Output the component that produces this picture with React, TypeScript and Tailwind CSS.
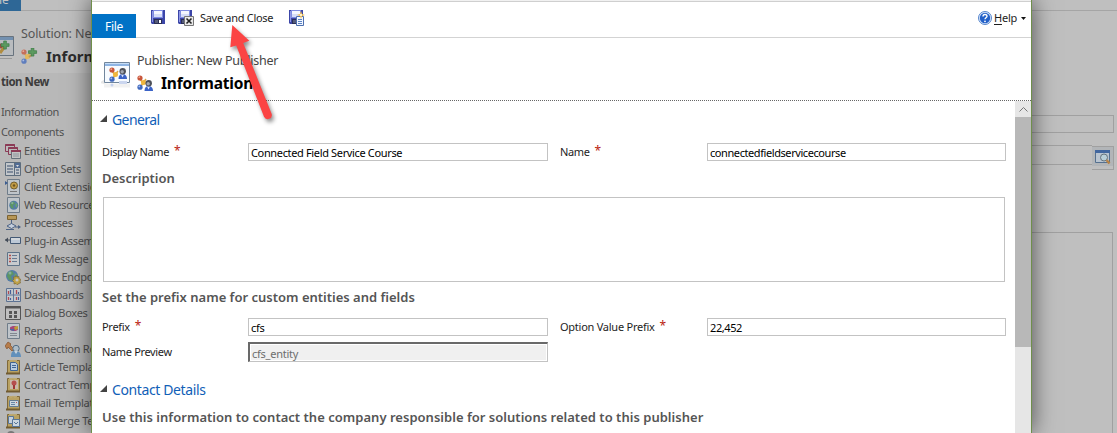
import type { ReactNode } from "react";

const Svg = ({ w = 16, h = 16, children, className = "" }: { w?: number; h?: number; children: ReactNode; className?: string }) => (
  <svg width={w} height={h} viewBox={`0 0 ${w} ${h}`} className={`shrink-0 ${className}`}>
    {children}
  </svg>
);

const Floppy = () => (
  <>
    <path d="M0 0h14v14H1L0 13z" fill="#3c46a8" />
    <path d="M1 1h1v11H1z" fill="#8f98e6" />
    <path d="M2 0h10v8H2z" fill="#7f8be0" />
    <path d="M3 1h8v6H3z" fill="#f4f6ff" />
    <path d="M3 4h8v3H3z" fill="#d5dcf8" />
    <path d="M3 9h8v5H3z" fill="#2b2f55" />
    <path d="M4 10h3v3H4z" fill="#555b78" />
    <path d="M8 10h2v3H8z" fill="#fff" />
  </>
);

const SaveIcon = () => <Svg w={14} h={14}><Floppy /></Svg>;
const SaveCloseIcon = () => (
  <Svg w={16} h={16}>
    <Floppy />
    <path d="M6.500 6.500h9v9h-9z" fill="#e9e9e9" stroke="#777" />
    <path d="M8.500 8.500l5 5M13.500 8.500l-5 5" stroke="#222" strokeWidth="1.600" />
  </Svg>
);
const SaveNewIcon = () => (
  <Svg w={16} h={16}>
    <Floppy />
    <path d="M7.500 6.500h7v9h-7z" fill="#f2f7ff" stroke="#4e6fae" />
    <path d="M9 9.500h4M9 11.500h4M9 13.500h4" stroke="#5b82c4" />
    <path d="M12 1l1 3 3 1-3 1-1 3-1-3-3-1 3-1z" fill="#f6bd47" />
    <circle cx="12" cy="5" r="1.200" fill="#fff6cf" />
  </Svg>
);

const Trio = () => (
  <>
    <path d="M3 4l3 4-3 5M6 8l3-4" stroke="#d9a441" strokeWidth="1.500" fill="none" />
    <circle cx="3" cy="3" r="2.600" fill="#c8553a" />
    <circle cx="6.500" cy="7.500" r="2.500" fill="#f0b63c" />
    <circle cx="3" cy="12.200" r="2.600" fill="#4069bd" />
    <circle cx="2.300" cy="2.200" r="0.900" fill="#eca48f" />
    <circle cx="2.300" cy="11.400" r="0.900" fill="#a5bdf0" />
  </>
);
const Person = () => (
  <>
    <path d="M0.500 11c0-3.500 1.500-5 4-5S9 7.500 9 11z" fill="#3b63c7" />
    <path d="M3 6.500l1.500 3L6 6.500z" fill="#dce8ff" />
    <circle cx="4.700" cy="3.200" r="3.200" fill="#4d5059" />
    <circle cx="4.200" cy="3.700" r="1.700" fill="#a2a7b1" />
  </>
);

const PublisherSmall = () => (
  <Svg w={17} h={17}>
    <Trio />
    <g transform="translate(7 5)"><Person /></g>
  </Svg>
);
const PublisherLarge = () => (
  <Svg w={32} h={32}>
    <path d="M-2 23l6-4v5z" fill="#e6e6e6" />
    <path d="M3 23.500h26v4H3z" fill="#f1f1f1" />
    <path d="M3.500 2.500h25v20h-25z" fill="#f7fbff" stroke="#71869d" />
    <path d="M4 3h24v3H4z" fill="#8fb5e4" />
    <path d="M4 3h24v1H4z" fill="#c7ddf5" />
    <g transform="translate(8 7)"><Trio /></g>
    <g transform="translate(17 8)"><Person /><path d="M1 13h8v3H1z" fill="#cbd6ef" /></g>
    <circle cx="11" cy="25" r="1.500" fill="#c5d2ef" />
  </Svg>
);
const Plus = () => <path d="M3 0h3v3h3v3H6v3H3V6H0V3h3z" fill="#5c9a60" stroke="#357740" strokeWidth="0.700" />;
const SolutionSmall = () => (
  <Svg w={17} h={17}>
    <g opacity="0.750"><g transform="translate(0 1)"><Trio /></g><path d="M8 9l4-3" stroke="#b38b39" strokeWidth="2" /></g>
    <g transform="translate(7.500 0) scale(.9)"><Plus /></g>
  </Svg>
);
const SolutionLarge = () => (
  <Svg w={15} h={28}>
    <path d="M-1 .5h14.500v19H-1z" fill="#b9bcbf" stroke="#68737e" />
    <path d="M0 1h13v3H0z" fill="#7290b0" />
    <circle cx="1" cy="10" r="2.500" fill="#a04d40" />
    <path d="M0 17l3-4 2-3" stroke="#b08c3f" strokeWidth="3" fill="none" />
    <g transform="translate(1 5) scale(.9)"><Plus /></g>
    <path d="M0 22h12v1H0z" fill="#999" />
  </Svg>
);

const sheet = <path d="M2.500 .5h12v15h-12z" fill="#bfc5ca" stroke="#6f7c89" />;
const gold = (
  <>
    <path d="M2.500 1.500h12v13h-12z" fill="#b9a263" stroke="#80693a" />
    <path d="M1 14.500h14" stroke="#715b30" strokeWidth="2" />
    <path d="M4 1l2 1 2-1 2 1 2-1" stroke="#d0bd85" fill="none" />
  </>
);
const globe = (
  <>
    <circle cx="7" cy="7" r="6" fill="#557da5" />
    <path d="M3 3l4-1 2 3-3 2 1 4-3 0-2-4z" fill="#5c9664" />
    <path d="M10 4l2 2-1 4-2-2z" fill="#6aa270" />
    <circle cx="5" cy="4" r="1.500" fill="#9fbcc4" opacity=".6" />
  </>
);

const navItems: { label: string; icon: ReactNode }[] = [
  { label: "Entities", icon: (<>
    <path d="M.5 1.500h9v7h-9z" fill="#bbb" stroke="#8b3b56" /><path d="M.5 2h9" stroke="#8b3b56" strokeWidth="2" />
    <path d="M3.500 4.500h9v7h-9z" fill="#bbb" stroke="#8b3b56" /><path d="M3.500 5h9" stroke="#8b3b56" strokeWidth="2" />
    <path d="M6.500 7.500h9v8h-9z" fill="#c3c3c3" stroke="#65707a" /><path d="M6 8h10" stroke="#8b3b56" strokeWidth="2" />
    <path d="M8 11h6M8 13h6" stroke="#8d969e" /></>) },
  { label: "Option Sets", icon: (<>
    <path d="M.5 1.500h15v13H.5z" fill="#c3c7cb" stroke="#5e6d7d" /><path d="M9.500 1v14" stroke="#5e6d7d" />
    <path d="M10 2h5v5h-5z" fill="#526c94" /><path d="M11 4h3l-1.500 2z" fill="#ddd" />
    <path d="M2 5h6M2 8h6M2 11h6M11 9h3M11 12h3" stroke="#68778c" strokeWidth="1.300" /></>) },
  { label: "Client Extensions", icon: (<>
    {sheet}<path d="M0 2l3 2-3 2z" fill="#3b5d91" /><circle cx="9" cy="6.500" r="3.500" fill="#c19b45" stroke="#74602e" /><circle cx="9" cy="6.500" r="1.200" fill="#6b5526" /><path d="M5 12.500h7" stroke="#777" /></>) },
  { label: "Web Resources", icon: (<>{sheet}<g transform="translate(3.500 3) scale(.75)">{globe}</g></>) },
  { label: "Processes", icon: (<>
    <path d="M2.500 .5h9v4h-9z" fill="#b79756" stroke="#7c6230" /><path d="M6.500 5v4M10 12h5" stroke="#4d6385" fill="none" />
    <path d="M2 11l4.500-2.500L11 11l-4.500 2.500z" fill="#c5cedc" stroke="#4d6385" /><path d="M1 14.500h8" stroke="#4d6385" /><path d="M13 10l3 2-3 2z" fill="#4d6385" /></>) },
  { label: "Plug-in Assemblies", icon: (<>
    <path d="M0 7h5" stroke="#444c59" /><path d="M3 4.500L0 7l3 2.500z" fill="#444c59" /><path d="M5.500 4.500h10v6h-10z" fill="#bcc8d6" stroke="#445974" /><path d="M6 5h9v2H6z" fill="#d2d7dc" /></>) },
  { label: "Sdk Message Processing", icon: (<>
    <path d="M2.500 1.500h12v13h-12z" fill="#c8cbce" stroke="#5f7489" /><path d="M4 4.500h2M4 7.500h2M4 10.500h2" stroke="#b54c48" strokeWidth="1.500" /><path d="M7 4.500h5M7 7.500h5M7 10.500h5" stroke="#687b93" /></>) },
  { label: "Service Endpoints", icon: (<>
    {globe}<path d="M11 6.500l1 1.500 2-.5v2l2 1-1 1.500.5 2-2 .5-1 1.500-1.500-1.500-2 .5V13l-1.500-1.500L9 10l-.5-2 2 0z" fill="#c0a247" stroke="#77622b" strokeWidth=".6" /><circle cx="12" cy="11" r="1.500" fill="#c8c8c8" /></>) },
  { label: "Dashboards", icon: (<>
    <path d="M1.500 1.500h14v13h-14z" fill="#c5c9ce" stroke="#5c7292" /><path d="M8.500 1v14M1 8h15" stroke="#60779a" />
    <path d="M3.500 7V4M11.500 7V3M3.500 13V10M11.500 13v-3" stroke="#af4952" strokeWidth="1.300" /><path d="M5.500 7V3M13.500 7V5M5.500 13V11M13.500 13V10" stroke="#455f99" strokeWidth="1.200" /></>) },
  { label: "Dialog Boxes", icon: (<>
    <path d="M.5 1.500h15v13H.5z" fill="#bfbfbf" stroke="#555" /><path d="M0 2.500h16" stroke="#555" strokeWidth="2" /><path d="M4 6h3v3H4zM9 6h3v3H9zM4 10h3v3H4zM9 10h3v3H9z" fill="#575757" /></>) },
  { label: "Reports", icon: (<>
    {sheet}<path d="M5 4.500c2-2 6-2 8 0v2c-2 2-6 2-8 0z" fill="#a54679" /><path d="M9 4l4-1v3l-3 1z" fill="#bd9f36" /><path d="M5 6h4v2L5 7z" fill="#4869a4" /><path d="M5 10.500h7M5 12.500h7" stroke="#818891" /></>) },
  { label: "Connection Roles", icon: (<>
    <path d="M0 5l3-4 3 2-1 1 4 4-2 2-4-4-1 2z" fill="#b67d4b" stroke="#82522e" strokeWidth=".7" /><path d="M6 16c0-5 1-6 4.500-6S16 12 16 16z" fill="#6290bb" /><circle cx="11" cy="7.500" r="3.200" fill="#aebdc8" stroke="#526c83" /><path d="M9 10l2 3 2-3z" fill="#c7d4de" /></>) },
  { label: "Article Templates", icon: (<>{gold}<path d="M5.500 3.500h5l2 2v6h-7z" fill="#b8ccdf" stroke="#3f6493" /><path d="M7 6.500h4M7 8.500h4" stroke="#3f6493" /></>) },
  { label: "Contract Templates", icon: (<>{gold}<path d="M5 3h8v9H5z" fill="#c9b8aa" /><circle cx="9" cy="6" r="2.500" fill="#b64e4e" /><path d="M8 8h2v4H8z" fill="#a13737" /></>) },
  { label: "Email Templates", icon: (<>{gold}<path d="M4.500 5.500h9v6h-9z" fill="#cbd6df" stroke="#647c94" /><path d="M6 7.500h4M6 9.500h4" stroke="#6886a5" /><path d="M11 7h1v1h-1z" fill="#b55" /></>) },
  { label: "Mail Merge Templates", icon: (<>{gold}<path d="M3.500 3.500h5v7h-5z" fill="#c5d0dc" stroke="#587699" /><path d="M7.500 6.500h7v7h-7z" fill="#cbd6df" stroke="#587699" /><path d="M9 9l2 2 2-2" stroke="#587699" fill="none" /></>) },
  { label: "", icon: (<><circle cx="6" cy="4" r="4" fill="#777" /><circle cx="6" cy="4" r="2" fill="#aaa" /></>) },
];

const Star = () => <span className="mb-[2px] ml-[5px] text-[12px] leading-[12px] text-[#b91c10]">*</span>;

const Label = ({ children, required = false, className = "" }: { children: string; required?: boolean; className?: string }) => (
  <div className={`flex shrink-0 items-center whitespace-nowrap text-[11px] leading-[18px] text-[#1d1d1d] ${className}`}>
    <span>{children}</span>
    {required && <Star />}
  </div>
);

const Field = ({ value, className = "" }: { value: string; className?: string }) => (
  <div className={`flex h-[18px] shrink-0 items-center border border-[#c3c3c3] bg-white pt-[2px] pl-[2px] text-[11px] leading-[16px] whitespace-nowrap text-black ${className}`}>
    {value}
  </div>
);

const SectionTitle = ({ children, className = "" }: { children: string; className?: string }) => (
  <div className={`flex h-5 items-center pl-2 text-[14px] leading-5 text-[#1160b7] ${className}`}>
    <Svg w={7} h={7} className="mr-[5px] mb-[4px]"><path d="M7 0v7H0z" fill="#444" /></Svg>
    <span>{children}</span>
  </div>
);

const SubTitle = ({ children, className = "" }: { children: string; className?: string }) => (
  <div className={`h-5 pl-[10px] text-[13px] leading-5 font-semibold whitespace-nowrap text-[#555] ${className}`}>{children}</div>
);

function Background() {
  return (
    <div className="flex h-full w-full justify-between bg-[#bfbfbf]">
      <div className="flex w-[91px] shrink-0 flex-col overflow-hidden">
        <div className="flex h-[11px] shrink-0 border-b border-[#a5a5a5]">
          <div className="flex h-[11px] w-[21px] items-end overflow-hidden bg-[#2e6796] text-[12px] leading-[14px] text-[#c5c5c5]">
            <span className="-ml-[1px] mb-[4px]">le</span>
          </div>
        </div>
        <div className="flex h-[62px] shrink-0">
          <div className="w-[21px] shrink-0 pt-[25px]"><SolutionLarge /></div>
          <div className="whitespace-nowrap">
            <div className="pt-[14px] text-[12.5px] leading-[18px] tracking-[-0.1px] text-[#555]">Solution: New Solution</div>
            <div className="mt-[3px] flex items-center">
              <SolutionSmall />
              <span className="ml-[8px] text-[15px] leading-[20px] font-bold text-[#2d2d2d]">Information</span>
            </div>
          </div>
        </div>
        <div className="flex-1 bg-[#b8b8b8] whitespace-nowrap text-[#505050]">
          <div className="h-[30px] pl-[1px] text-[11.5px] leading-[17px] font-bold tracking-[-0.5px] text-[#3c3c3c]">tion New</div>
          <div className="h-[19px] pl-[1px] text-[11px] leading-[17px] tracking-[-0.4px]">Information</div>
          <div className="h-[20px] pl-[1px] text-[11px] leading-[20px] tracking-[-0.35px]">Components</div>
          {navItems.map((item, i) => (
            <div key={i} className="flex h-[18px] items-center pl-[5px] text-[11px] leading-[18px]">
              <Svg>{item.icon}</Svg>
              <span className="ml-[3px] tracking-[-0.27px]">{item.label}</span>
            </div>
          ))}
        </div>
      </div>
      <div className="flex w-[85px] shrink-0 flex-col">
        <div className="h-[11px] shrink-0 border-b border-[#a5a5a5]" />
        <div className="mt-[104px] h-[18px] w-[82px] shrink-0 border border-l-0 border-[#a0a0a0]" />
        <div className="mt-[12px] flex h-[25px] w-[82px] shrink-0">
          <div className="h-[20px] flex-1 border-y border-[#a0a0a0]" />
          <div className="mt-[1px] h-[24px] w-[22px] border-y border-r border-[#a0a0a0]">
            <div className="flex h-[19px] items-center justify-center bg-[#b2b5b8]">
              <Svg w={17} h={16}>
                <path d="M1.500 1.500h14v12h-14z" fill="#b9c4d0" stroke="#55708f" />
                <path d="M1 1h15v3H1z" fill="#41669f" />
                <circle cx="10" cy="8.500" r="3.500" fill="#b9cfd8" stroke="#65747e" />
                <path d="M12.500 11l3 3.500" stroke="#b88346" strokeWidth="2.500" />
              </Svg>
            </div>
          </div>
        </div>
        <div className="mt-[62px] w-[81px] flex-1 border-t border-r border-[#a0a0a0]" />
      </div>
    </div>
  );
}

function Dialog() {
  return (
    <div className="absolute top-0 left-[91px] flex h-[433px] w-[941px] flex-col border-x border-[#6f8f4b] bg-white shadow-[0_0_22px_rgba(0,0,0,0.6)]">
      <div className="h-[2px] shrink-0 border-b border-[#cfcfcf] bg-[#f1f1f1]" />
      <div className="flex h-[36px] shrink-0 border-b border-[#d3d3d3]">
        <div className="mt-[12px] flex h-[24px] w-[44px] items-center justify-center bg-[#0072c6] pt-[2px] text-[12px] leading-4 tracking-[-0.3px] text-white">File</div>
        <div className="flex h-[32px] flex-1 items-center pl-[15px] text-[11px] text-[#1d1d1d]">
          <div className="mb-[2px]"><SaveIcon /></div>
          <div className="ml-[13px]"><SaveCloseIcon /></div>
          <span className="ml-[6px] w-[73px] whitespace-nowrap tracking-[-0.3px]">Save and Close</span>
          <div className="ml-[16px]"><SaveNewIcon /></div>
          <div className="mr-[5px] ml-auto flex items-center">
            <Svg w={14} h={14}>
              <circle cx="7" cy="7" r="6.500" fill="#dce9fb" stroke="#5585cd" />
              <circle cx="7" cy="7" r="5.200" fill="#2260c8" />
              <path d="M5 5.500c0-2.700 4-2.700 4-.3 0 1.600-2 1.500-2 3" stroke="#fff" strokeWidth="1.400" fill="none" />
              <circle cx="7" cy="10.300" r=".9" fill="#fff" />
            </Svg>
            <span className="ml-[2px] w-[23px] whitespace-nowrap tracking-[-0.2px]"><span className="underline underline-offset-2">H</span>elp</span>
            <Svg w={5} h={3} className="ml-[4px]"><path d="M0 0h5L2.500 3z" fill="#111" /></Svg>
          </div>
        </div>
      </div>
      <div className="flex h-[63px] shrink-0 border-b border-dotted border-[#666] pl-[9px]">
        <div className="mt-[22px] h-8 w-8"><PublisherLarge /></div>
        <div className="ml-[4px] whitespace-nowrap">
          <div className="mt-[14px] text-[12.5px] leading-[18px] tracking-[-0.23px] text-[#444]">Publisher: New Publisher</div>
          <div className="mt-[3px] flex items-center">
            <PublisherSmall />
            <span className="ml-[7px] text-[15.5px] leading-5 font-bold tracking-[-0.2px] text-black">Information</span>
          </div>
        </div>
      </div>
      <div className="flex min-h-0 flex-1">
        <div className="flex min-w-0 flex-1 flex-col overflow-hidden">
          <SectionTitle className="mt-[9px] shrink-0 tracking-[-0.6px]">General</SectionTitle>
          <div className="mt-[13px] flex shrink-0 pl-[10px]">
            <Label required className="w-[146px] tracking-[-0.37px]">Display Name</Label>
            <Field value="Connected Field Service Course" className="w-[300px] tracking-[-0.35px]" />
            <Label required className="ml-[12px] w-[147px] tracking-[-0.37px]">Name</Label>
            <Field value="connectedfieldservicecourse" className="w-[299px] tracking-[-0.42px]" />
          </div>
          <SubTitle className="mt-[7px] shrink-0">Description</SubTitle>
          <div className="mt-[9px] ml-[11px] h-[85px] w-[902px] shrink-0 border border-[#c3c3c3]" />
          <SubTitle className="mt-[5px] shrink-0">Set the prefix name for custom entities and fields</SubTitle>
          <div className="mt-[11px] flex shrink-0 pl-[10px]">
            <Label required className="w-[146px] tracking-[-0.3px]">Prefix</Label>
            <Field value="cfs" className="w-[300px] tracking-[-0.3px]" />
            <Label required className="ml-[12px] w-[147px] tracking-[-0.25px]">Option Value Prefix</Label>
            <Field value="22,452" className="w-[299px] tracking-[-0.4px]" />
          </div>
          <div className="mt-[6px] flex shrink-0 pl-[10px]">
            <Label className="w-[146px] tracking-[-0.35px]">Name Preview</Label>
            <div className="h-[20px] w-[300px] border-t-2 border-r border-b border-l-2 border-t-[#696969] border-r-[#c3c3c3] border-b-[#c3c3c3] border-l-[#696969] p-px">
              <div className="h-full bg-[#f0f0f0] pl-px text-[11px] leading-[17px] tracking-[-0.25px] text-[#6d6d6d]">cfs_entity</div>
            </div>
          </div>
          <SectionTitle className="mt-[18px] shrink-0 tracking-[-0.38px]">Contact Details</SectionTitle>
          <SubTitle className="mt-[7px] shrink-0 tracking-[0.02px]">Use this information to contact the company responsible for solutions related to this publisher</SubTitle>
        </div>
        <div className="flex w-[16px] shrink-0 flex-col bg-[#e6e6e6]">
          <div className="flex h-[16px] items-center justify-center">
            <Svg w={9} h={5}><path d="M.5 4.500l4-4 4 4" stroke="#777" fill="none" /></Svg>
          </div>
          <div className="h-[230px] bg-[#b8b8b8]" />
        </div>
      </div>
    </div>
  );
}

export default function App() {
  return (
    <div className="relative h-[433px] w-[1117px] overflow-hidden font-['Noto_Sans',sans-serif]">
      <Background />
      <Dialog />
      <svg width="60" height="110" viewBox="0 0 60 110" className="absolute top-[15px] left-[222px] overflow-visible drop-shadow-[2px_3px_2px_rgba(0,0,0,0.45)]">
        <path d="M10.300 10L8.300 32.300L14.200 30.400L42 101.800A4.100 4.100 0 0 0 49.600 98.800L21.200 28L27.300 25.700Z" fill="#fb4444" />
      </svg>
    </div>
  );
}
